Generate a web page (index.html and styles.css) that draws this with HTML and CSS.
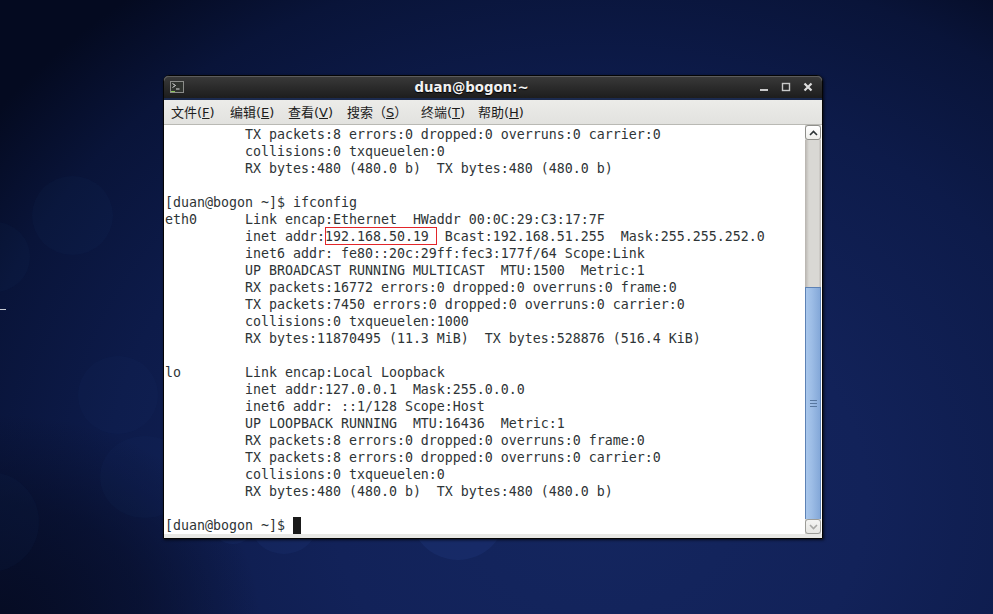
FILE: index.html
```html
<!DOCTYPE html>
<html lang="zh">
<head>
<meta charset="utf-8">
<title>duan@bogon:~</title>
<link rel="stylesheet" href="styles.css">
</head>
<body>
<div class="desktop">
  <span class="bubble b1"></span>
  <span class="bubble b2"></span>
  <span class="bubble b3"></span>
  <span class="bubble b4"></span>
  <span class="bubble b5"></span>
  <span class="bubble b6"></span>
  <span class="bubble b7"></span>
  <span class="bubble b8"></span>
  <span class="edge-mark"></span>
  <div class="window">
    <header class="titlebar">
      <svg class="app-icon" width="14" height="12" viewBox="0 0 14 12">
        <rect x="0" y="0" width="14" height="12" fill="#8b8c89"/>
        <rect x="1" y="1" width="12" height="10" fill="#30332f"/>
        <path d="M2.5 2.5 L5.5 4.5 L2.5 6.5" fill="none" stroke="#dcdcdc" stroke-width="1"/>
        <path d="M6 8 H9.5" stroke="#dcdcdc" stroke-width="1"/>
        <rect x="1" y="10" width="4" height="1" fill="#8ec45a"/>
      </svg>
      <div class="title">duan@bogon:~</div>
      <div class="controls">
        <svg width="10" height="10" viewBox="0 0 10 10"><rect x="1" y="7" width="8" height="2" fill="#c9c9c9"/></svg>
        <svg width="10" height="10" viewBox="0 0 10 10"><rect x="1.5" y="1.5" width="7" height="7" fill="none" stroke="#c9c9c9" stroke-width="1.4"/></svg>
        <svg width="10" height="10" viewBox="0 0 10 10"><path d="M1.5 1.5 L8.5 8.5 M8.5 1.5 L1.5 8.5" stroke="#dcdcdc" stroke-width="2.2"/></svg>
      </div>
    </header>
    <nav class="menubar">
      <span class="menu m-file">文件(<u>F</u>)</span>
      <span class="menu m-edit">编辑(<u>E</u>)</span>
      <span class="menu m-view">查看(<u>V</u>)</span>
      <span class="menu m-search">搜索（<u>S</u>）</span>
      <span class="menu m-term">终端(<u>T</u>)</span>
      <span class="menu m-help">帮助(<u>H</u>)</span>
    </nav>
    <div class="body">
<pre class="terminal">          TX packets:8 errors:0 dropped:0 overruns:0 carrier:0
          collisions:0 txqueuelen:0
          RX bytes:480 (480.0 b)  TX bytes:480 (480.0 b)

[duan@bogon ~]$ ifconfig
eth0      Link encap:Ethernet  HWaddr 00:0C:29:C3:17:7F
          inet addr:<span class="mark">192.168.50.19 </span> Bcast:192.168.51.255  Mask:255.255.252.0
          inet6 addr: fe80::20c:29ff:fec3:177f/64 Scope:Link
          UP BROADCAST RUNNING MULTICAST  MTU:1500  Metric:1
          RX packets:16772 errors:0 dropped:0 overruns:0 frame:0
          TX packets:7450 errors:0 dropped:0 overruns:0 carrier:0
          collisions:0 txqueuelen:1000
          RX bytes:11870495 (11.3 MiB)  TX bytes:528876 (516.4 KiB)

lo        Link encap:Local Loopback
          inet addr:127.0.0.1  Mask:255.0.0.0
          inet6 addr: ::1/128 Scope:Host
          UP LOOPBACK RUNNING  MTU:16436  Metric:1
          RX packets:8 errors:0 dropped:0 overruns:0 frame:0
          TX packets:8 errors:0 dropped:0 overruns:0 carrier:0
          collisions:0 txqueuelen:0
          RX bytes:480 (480.0 b)  TX bytes:480 (480.0 b)

[duan@bogon ~]$ <span class="cursor"> </span></pre>
      <aside class="scrollbar">
        <div class="arrow up">
          <svg width="9" height="6" viewBox="0 0 9 6"><path d="M1 5 L4.5 1.5 L8 5" fill="none" stroke="#2e3436" stroke-width="1.6"/></svg>
        </div>
        <div class="trough"></div>
        <div class="thumb"><span class="grip"></span></div>
        <div class="arrow down">
          <svg width="9" height="6" viewBox="0 0 9 6"><path d="M1 1 L4.5 4.5 L8 1" fill="none" stroke="#a8a8a5" stroke-width="1.6"/></svg>
        </div>
      </aside>
    </div>
  </div>
</div>
</body>
</html>
```
FILE: styles.css
```css
* { box-sizing: border-box; }
html, body { margin: 0; height: 100%; overflow: hidden; }
.desktop {
  position: relative;
  width: 993px;
  height: 614px;
  overflow: hidden;
  display: flex;
  justify-content: flex-start;
  align-items: flex-start;
  padding: 75px 0 0 163px;
  background:
    radial-gradient(ellipse 260px 200px at 0 614px, #060c24 0%, rgba(6,12,36,.6) 55%, rgba(6,12,36,0) 100%),
    radial-gradient(ellipse 760px 640px at 600px 500px, #14265f 0%, #122259 35%, #0d1b4a 65%, #091439 85%, #040a20 100%);
  background-color: #040a20;
}
.bubble { position: absolute; border-radius: 50%; background: rgba(50,85,170,.045); }
.b1 { left: 32px; top: 176px; width: 81px; height: 79px; }
.b2 { left: -40px; top: 222px; width: 70px; height: 70px; }
.b3 { left: 78px; top: 356px; width: 80px; height: 78px; }
.b4 { left: 100px; top: 436px; width: 90px; height: 82px; }
.b5 { left: -60px; top: 472px; width: 99px; height: 100px; }
.b6 { left: 210px; top: 500px; width: 46px; height: 44px; background: rgba(50,85,170,.1); }
.b7 { left: 250px; top: 490px; width: 68px; height: 64px; background: rgba(50,85,170,.1); }
.b8 { left: 410px; top: 464px; width: 96px; height: 96px; background: rgba(50,85,170,.14); }
.edge-mark { position: absolute; left: 0; top: 309px; width: 6px; height: 1px; background: #c8ccd4; }

.window {
  position: relative;
  width: 660px;
  height: 464px;
  display: flex;
  flex-direction: column;
  background: #e8e8e5;
  border: 1px solid #050505;
  border-radius: 6px 6px 0 0;
  box-shadow: 1px 1px 3px rgba(0,0,0,.7);
}
.titlebar {
  flex: 0 0 24px;
  display: flex;
  align-items: center;
  padding: 0 9px 0 6px;
  border-radius: 5px 5px 0 0;
  background: linear-gradient(#3a3a3a 0%, #2b2b2b 50%, #1d1d1d 100%);
  box-shadow: inset 0 1px 0 #5c5c5c;
  border-bottom: 2px solid #1b2a4e;
}
.app-icon { flex: none; }
.title {
  flex: 1;
  text-align: center;
  font: bold 13.33px "DejaVu Sans", sans-serif;
  color: #f2f2f2;
  text-shadow: 0 1px 1px #000;
}
.controls { display: flex; gap: 12px; align-items: center; }
.controls svg { display: block; }

.menubar {
  flex: 0 0 25px;
  display: flex;
  align-items: center;
  padding: 0 0 2px 7px;
  background: linear-gradient(#ecece9, #e2e2df);
  border-bottom: 1px solid #b9b9b4;
  font: 13px "DejaVu Sans", "Noto Sans CJK SC", sans-serif;
  color: #1c1c1c;
}
.menu { white-space: nowrap; }
.m-file { width: 59px; }
.m-edit { width: 58px; }
.m-view { width: 59px; }
.m-search { width: 74px; }
.m-term { width: 57px; }

.body { flex: 0 0 409px; display: flex; background: #fff; }
.terminal {
  flex: 1;
  margin: 0;
  padding: 1px 0 0 1px;
  font: 13.29px/17px "DejaVu Sans Mono", monospace;
  color: #2e3436;
  background: #fff;
  overflow: hidden;
}
.mark { box-shadow: inset 0 0 0 1px #e2262a; padding: 2px 0 1px; }
.cursor { display: inline-block; width: 8px; height: 17px; background: #1a1a1a; vertical-align: top; }

.scrollbar {
  flex: 0 0 16px;
  display: flex;
  flex-direction: column;
  background: #d6d5d1;
  margin-right: 1px;
}
.arrow {
  flex: 0 0 15px;
  display: flex;
  align-items: center;
  justify-content: center;
  background: linear-gradient(#fff, #efefec);
  border: 1px solid #8f8f8b;
  border-radius: 3px;
}
.trough {
  flex: 0 0 147px;
  background: linear-gradient(90deg, #b7b3ae, #d9d8d4 25%, #d9d8d4 85%, #b7b3ae);
}
.thumb {
  flex: 1;
  display: flex;
  align-items: center;
  justify-content: center;
  background: linear-gradient(90deg, #a9c7ec, #9dbde6 40%, #84a8d8);
  border: 1px solid #5d82b5;
  border-bottom: 0;
}
.grip {
  width: 7px;
  height: 7px;
  background: repeating-linear-gradient(#57779f 0 1px, transparent 1px 3px);
}
.down { background: linear-gradient(#f4f4f2, #e6e6e3); border-color: #9c9c98; }
```
